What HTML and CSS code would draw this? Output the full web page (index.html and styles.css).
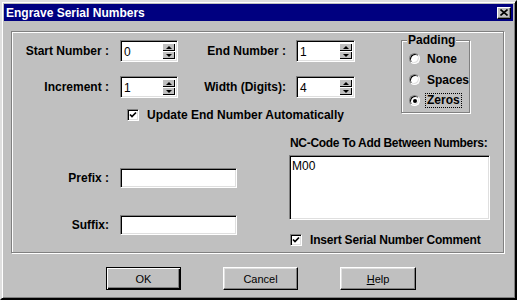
FILE: index.html
```html
<!DOCTYPE html>
<html lang="en">
<head>
    <meta charset="UTF-8">
    <title>Engrave Serial Numbers</title>
    <link rel="stylesheet" href="styles.css">
</head>
<body>
    <div class="window">
        <div class="titlebar">
            <span class="title">Engrave Serial Numbers</span>
            <button class="close">
                <svg width="8" height="7" viewBox="0 0 8 7"><path d="M0.5 0.5 L7.5 6.5 M7.5 0.5 L0.5 6.5" stroke="#000" stroke-width="1.6" fill="none"/></svg>
            </button>
        </div>

        <div class="panel">
            <div class="top">
                <div class="left">
                    <div class="fields">
                        <label class="lbl">Start Number :</label>
                        <div class="spin"><span class="val">0</span><span class="arrows"><span class="up"></span><span class="down"></span></span></div>
                        <label class="lbl lbl-2">End Number :</label>
                        <div class="spin"><span class="val">1</span><span class="arrows"><span class="up"></span><span class="down"></span></span></div>
                        <label class="lbl">Increment :</label>
                        <div class="spin"><span class="val">1</span><span class="arrows"><span class="up"></span><span class="down"></span></span></div>
                        <label class="lbl lbl-2">Width (Digits):</label>
                        <div class="spin"><span class="val">4</span><span class="arrows"><span class="up"></span><span class="down"></span></span></div>
                    </div>
                    <div class="check check-update">
                        <span class="box"><svg width="8" height="8" viewBox="0 0 8 8"><path d="M1 3.5 L3 5.5 L7 1.5" stroke="#000" stroke-width="1.7" fill="none"/></svg></span>
                        Update End Number Automatically
                    </div>
                </div>

                <fieldset class="padding">
                    <legend>Padding</legend>
                    <div class="radio"><span class="dot"></span>None</div>
                    <div class="radio"><span class="dot"></span>Spaces</div>
                    <div class="radio"><span class="dot on"></span><span class="focus">Zeros</span></div>
                </fieldset>
            </div>

            <div class="bottom">
                <div class="affix">
                    <label class="lbl">Prefix :</label>
                    <div class="field"></div>
                    <label class="lbl">Suffix:</label>
                    <div class="field"></div>
                </div>
                <div class="nc">
                    <div class="nc-label">NC-Code To Add Between Numbers:</div>
                    <div class="memo">M00</div>
                    <div class="check">
                        <span class="box"><svg width="8" height="8" viewBox="0 0 8 8"><path d="M1 3.5 L3 5.5 L7 1.5" stroke="#000" stroke-width="1.7" fill="none"/></svg></span>
                        Insert Serial Number Comment
                    </div>
                </div>
            </div>
        </div>

        <div class="buttons">
            <button class="btn default">OK</button>
            <button class="btn">Cancel</button>
            <button class="btn btn-help"><u>H</u>elp</button>
        </div>
    </div>
</body>
</html>
```

FILE: styles.css
```css
body {
    margin: 0;
    background-color: #c0c0c0;
    font-family: "Liberation Sans", Arial, sans-serif;
    font-size: 12px;
    color: #000;
}
.window {
    box-sizing: border-box;
    width: 517px;
    height: 300px;
    padding: 2px;
    border: 2px solid;
    border-color: #dfdfdf #000 #000 #dfdfdf;
    box-shadow: inset 1px 1px #fff, inset -1px -1px #808080;
    background: #c0c0c0;
}
.titlebar {
    height: 17px;
    display: flex;
    align-items: center;
    justify-content: space-between;
    background: #000080;
}
.title {
    padding-left: 2px;
    color: #fff;
    font-weight: bold;
    font-size: 12px;
}
.close {
    width: 14px;
    height: 12px;
    margin-right: 2px;
    padding: 0;
    display: flex;
    align-items: center;
    justify-content: center;
    background: #c0c0c0;
    border: 1px solid;
    border-color: #fff #000 #000 #fff;
    box-shadow: inset -1px -1px #808080;
}

/* etched group panel */
.panel {
    margin: 10px 9px 0 7px;
    padding: 1px;
    border: 1px solid #808080;
    box-shadow: inset 1px 1px #fff, 1px 1px #fff;
}
.top {
    display: flex;
    align-items: flex-start;
}
.left {
    padding-top: 7px;
}
.fields {
    display: grid;
    grid-template-columns: 107px 58px 118px 59px;
    grid-template-rows: 22px 22px;
    row-gap: 14px;
}
.lbl {
    display: flex;
    align-items: center;
    justify-content: flex-end;
    padding-right: 11px;
    font-weight: bold;
}
.lbl-2 {
    padding-right: 10px;
}
.spin, .field, .memo {
    box-sizing: border-box;
    background: #fff;
    border: 1px solid;
    border-color: #808080 #fff #fff #808080;
    box-shadow: inset 1px 1px #000, inset -1px -1px #dfdfdf;
}
.spin {
    display: flex;
    padding: 2px;
}
.val {
    flex: 1;
    padding-left: 1px;
    line-height: 18px;
    font-size: 12px;
}
.arrows {
    width: 13px;
    display: flex;
    flex-direction: column;
}
.arrows span {
    flex: 1;
    display: flex;
    align-items: center;
    justify-content: center;
    background: #c0c0c0;
    box-shadow: inset 1px 1px #fff, inset -1px -1px #000;
}
.arrows .up::after {
    content: "";
    border-left: 3px solid transparent;
    border-right: 3px solid transparent;
    border-bottom: 3px solid #000;
}
.arrows .down::after {
    content: "";
    border-left: 3px solid transparent;
    border-right: 3px solid transparent;
    border-top: 3px solid #000;
}

.check {
    display: flex;
    align-items: center;
    gap: 8px;
    height: 14px;
    font-weight: bold;
    white-space: nowrap;
}
.check-update {
    margin: 10px 0 0 114px;
}
.box {
    box-sizing: border-box;
    width: 12px;
    height: 12px;
    flex: none;
    display: flex;
    align-items: center;
    justify-content: center;
    background: #fff;
    border: 1px solid;
    border-color: #808080 #fff #fff #808080;
    box-shadow: inset 1px 1px #000, inset -1px -1px #dfdfdf;
}

/* padding group */
.padding {
    box-sizing: border-box;
    width: 69px;
    margin: 0 0 0 46px;
    padding: 1px 0 1px 5px;
    border: 1px solid #808080;
    box-shadow: inset 1px 1px #fff, 1px 1px #fff;
}
.padding legend {
    padding: 0 1px;
    line-height: 14px;
    font-weight: bold;
    background: #c0c0c0;
}
.radio {
    height: 21px;
    display: flex;
    align-items: center;
    gap: 7px;
    padding-left: 2px;
    font-weight: bold;
}
.dot {
    box-sizing: border-box;
    width: 11px;
    height: 11px;
    border-radius: 50%;
    display: flex;
    align-items: center;
    justify-content: center;
    background: #fff;
    border: 1px solid;
    border-color: #808080 #fff #fff #808080;
    box-shadow: inset 1px 1px #000, inset -1px -1px #dfdfdf;
}
.dot.on::after {
    content: "";
    width: 4px;
    height: 4px;
    border-radius: 50%;
    background: #000;
}
.focus {
    padding: 0 1px;
    margin-left: -1px;
    outline: 1px dotted #000;
    line-height: 13px;
}

/* prefix / suffix and NC code */
.bottom {
    display: flex;
    padding: 14px 0 4px;
}
.affix {
    display: grid;
    grid-template-columns: 107px 117px;
    grid-template-rows: 20px 20px;
    row-gap: 27px;
    padding-top: 32px;
}
.nc {
    margin-left: 52px;
    width: 201px;
}
.nc-label {
    line-height: 14px;
    padding-left: 1px;
    font-weight: bold;
    white-space: nowrap;
    letter-spacing: -0.3px;
}
.memo {
    height: 65px;
    margin: 5px 0 13px;
    padding: 3px 2px;
    font-size: 12px;
}
.nc .check {
    padding-left: 1px;
    letter-spacing: -0.2px;
}

/* dialog buttons */
.buttons {
    display: flex;
    gap: 42px;
    margin-top: 14px;
    padding-left: 102px;
}
.btn {
    box-sizing: border-box;
    width: 75px;
    height: 23px;
    padding: 0;
    background: #c0c0c0;
    font-family: "Liberation Sans", Arial, sans-serif;
    font-size: 11px;
    color: #000;
    border: 1px solid;
    border-color: #fff #000 #000 #fff;
    box-shadow: inset -1px -1px #808080, inset 1px 1px #dfdfdf;
}
.btn.default {
    border: 1px solid #000;
    box-shadow: inset 1px 1px #fff, inset -1px -1px #000, inset -2px -2px #808080;
}
.btn-help {
    width: 76px;
}
```
